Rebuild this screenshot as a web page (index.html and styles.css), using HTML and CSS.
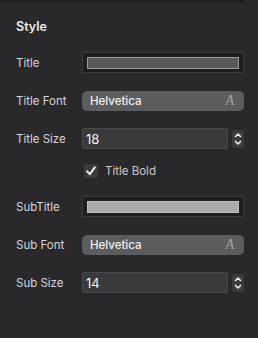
FILE: index.html
```html
<!DOCTYPE html>
<html lang="en">
<head>
  <meta charset="UTF-8" />
  <meta name="viewport" content="width=device-width, initial-scale=1.0" />
  <title>Style</title>
  <link rel="stylesheet" href="styles.css">
</head>
<body>
  <div class="topline"></div>
  <div class="panel">
    <h3 class="heading">Style</h3>

    <div class="row row-well">
      <label>Title</label>
      <div class="well"><div class="swatch dark"></div></div>
    </div>

    <div class="row row-font">
      <label>Title Font</label>
      <div class="font-pop"><span>Helvetica</span><i class="font-a">A</i></div>
    </div>

    <div class="row row-size">
      <label>Title Size</label>
      <div class="size-field">
        <div class="num">18</div>
        <div class="stepper">
          <svg width="12" height="18" viewBox="0 0 12 18">
            <path d="M3.5 6.5 L6 4 L8.5 6.5" />
            <path d="M3.5 11.5 L6 14 L8.5 11.5" />
          </svg>
        </div>
      </div>
    </div>

    <div class="row row-check">
      <label></label>
      <div class="check">
        <span class="box">
          <svg width="14" height="14" viewBox="0 0 14 14"><path d="M3.2 7.3 L5.8 10.2 L10.8 3.4" /></svg>
        </span>
        <span class="check-text">Title Bold</span>
      </div>
    </div>

    <div class="row row-well sub">
      <label>SubTitle</label>
      <div class="well"><div class="swatch light"></div></div>
    </div>

    <div class="row row-font">
      <label>Sub Font</label>
      <div class="font-pop"><span>Helvetica</span><i class="font-a">A</i></div>
    </div>

    <div class="row row-size">
      <label>Sub Size</label>
      <div class="size-field">
        <div class="num">14</div>
        <div class="stepper">
          <svg width="12" height="18" viewBox="0 0 12 18">
            <path d="M3.5 6.5 L6 4 L8.5 6.5" />
            <path d="M3.5 11.5 L6 14 L8.5 11.5" />
          </svg>
        </div>
      </div>
    </div>
  </div>
</body>
</html>
```

FILE: styles.css
```css
body {
  margin: 0;
  background: #29292b;
  font-family: Inter, "Liberation Sans", sans-serif;
  color: #dcdcdc;
  height: 338px;
  overflow: hidden;
}
.topline { width: 244px; height: 2px; background: #1d1d1f; }
.panel { padding: 0 14px 0 16px; }
.heading {
  margin: 0;
  padding-top: 17px;
  height: 20px;
  font-size: 12.5px;
  font-weight: 600;
  color: #ececec;
}
.row {
  display: flex;
  align-items: center;
}
.row label {
  width: 66px;
  flex: none;
  font-size: 11.5px;
  color: #d6d6d6;
}
.row-well { margin-top: 13px; height: 21px; }
.row-well.sub { margin-top: 18px; }
.row-font { margin-top: 18px; height: 20px; }
.row-size { margin-top: 17px; height: 21px; }
.row-check { margin-top: 15px; height: 14px; }

.well {
  flex: 1;
  height: 21px;
  box-sizing: border-box;
  background: #1e1e20;
  border: 1px solid #3a3a3c;
  padding: 4px 4px 3px 4px;
}
.swatch { height: 12px; box-sizing: border-box; border: 1px solid #9c9c9c; }
.swatch.dark { background: #5a5a5a; }
.swatch.light { background: #aaaaaa; border-color: #bdbdbd; }

.font-pop {
  flex: 1;
  height: 20px;
  border-radius: 5px;
  background: #5d5d5f;
  display: flex;
  align-items: center;
  justify-content: space-between;
  padding: 0 10px 0 8px;
  font-size: 11.5px;
  font-weight: 500;
  color: #f0f0f0;
}
.font-a {
  font-family: "Liberation Serif", serif;
  font-size: 14px;
  color: #a4a4a6;
}

.size-field { flex: 1; display: flex; align-items: center; gap: 4px; }
.num {
  flex: 1;
  height: 21px;
  box-sizing: border-box;
  background: #3a3a3c;
  border: 1px solid #4a4a4c;
  border-radius: 2px;
  padding: 2px 0 0 3px;
  font-size: 13px;
  color: #f2f2f2;
}
.stepper {
  width: 12px;
  height: 18px;
  border-radius: 3px;
  background: #3c3c3e;
  margin-top: 1px;
}
.stepper svg { display: block; }
.stepper path, .box path {
  fill: none;
  stroke: #f0f0f0;
  stroke-width: 1.6;
  stroke-linecap: round;
  stroke-linejoin: round;
}
.check { display: flex; align-items: center; gap: 7px; padding-left: 2px; }
.box {
  width: 14px;
  height: 14px;
  border-radius: 3px;
  background: #3c3c3e;
}
.box svg { display: block; }
.box path { stroke-width: 2; }
.check-text { font-size: 11.5px; color: #c8c8c8; }
```
